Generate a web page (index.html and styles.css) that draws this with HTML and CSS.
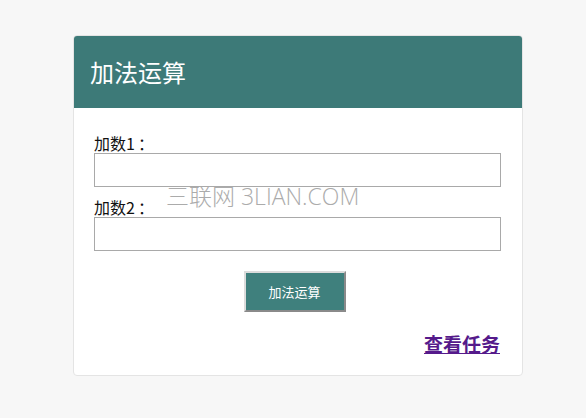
FILE: index.html
```html
<!DOCTYPE html>
<html lang="zh-CN">
<head>
<meta charset="utf-8">
<title>加法运算</title>
<link rel="stylesheet" href="styles.css">
</head>
<body>
<div class="page">
  <div class="card">
    <div class="card-header">
      <h1 class="title">加法运算</h1>
    </div>
    <form class="card-body">
      <label class="field-label" for="a">加数1<span class="colon">：</span></label>
      <input class="field-input" id="a" type="text">
      <label class="field-label" for="b">加数2<span class="colon">：</span></label>
      <input class="field-input" id="b" type="text">
      <div class="actions">
        <button class="btn" type="button">加法运算</button>
      </div>
      <div class="links">
        <a class="task-link" href="#">查看任务</a>
      </div>
    </form>
    <div class="watermark">三联网 3LIAN.COM</div>
  </div>
</div>
</body>
</html>
```
FILE: styles.css
```css
* { box-sizing: border-box; }
html, body { margin: 0; padding: 0; }
body {
  background: #f7f7f7;
  font-family: "Noto Sans CJK SC", "Noto Sans", sans-serif;
  color: #222;
}
.page {
  padding: 35px 0 0 73px;
}
.card {
  position: relative;
  width: 450px;
  height: 341px;
  background: #fff;
  border: 1px solid #e4e4e4;
  border-radius: 4px;
  overflow: hidden;
}
.card-header {
  background: #3d7a78;
  height: 73px;
  margin: -1px -1px 0 -1px;
  display: flex;
  align-items: center;
  padding-left: 17px;
}
.title {
  margin: 0;
  font-size: 24px;
  font-weight: normal;
  color: #fff;
  line-height: 30px;
}
.card-body {
  display: flex;
  flex-direction: column;
  padding: 15px 20px 0 20px;
  margin: 0;
}
.field-label {
  display: block;
  font-size: 16px;
  line-height: 20px;
  margin-top: 10px;
  color: #111;
}
.colon {
  display: inline-block;
  width: 18px;
  text-align: center;
  padding-left: 3px;
}
.field-input {
  display: block;
  width: 407px;
  height: 34px;
  border: 1px solid #a9a9a9;
  margin: 0;
  padding: 0 6px;
  background: #fff;
}
.actions {
  display: flex;
  justify-content: center;
  margin-top: 20px;
}
.btn {
  width: 102px;
  height: 41px;
  margin-right: 7px;
  background: #3f807d;
  color: #fff;
  font-family: "Noto Sans CJK SC", sans-serif;
  font-size: 13px;
  border: 2px solid;
  border-color: #dcdcdc #8a8a8a #8a8a8a #dcdcdc;
  padding: 0;
}
.links {
  display: flex;
  justify-content: flex-end;
  margin-top: 20px;
  padding-right: 2px;
}
.task-link {
  font-size: 19px;
  font-weight: bold;
  line-height: 24px;
  color: #551a8b;
  text-decoration: underline;
}
.watermark {
  position: absolute;
  left: 92px;
  top: 142px;
  font-family: "Open Sans", "Noto Sans CJK SC", sans-serif;
  font-weight: 300;
  font-size: 23px;
  color: #ababab;
  white-space: nowrap;
  pointer-events: none;
}
```
